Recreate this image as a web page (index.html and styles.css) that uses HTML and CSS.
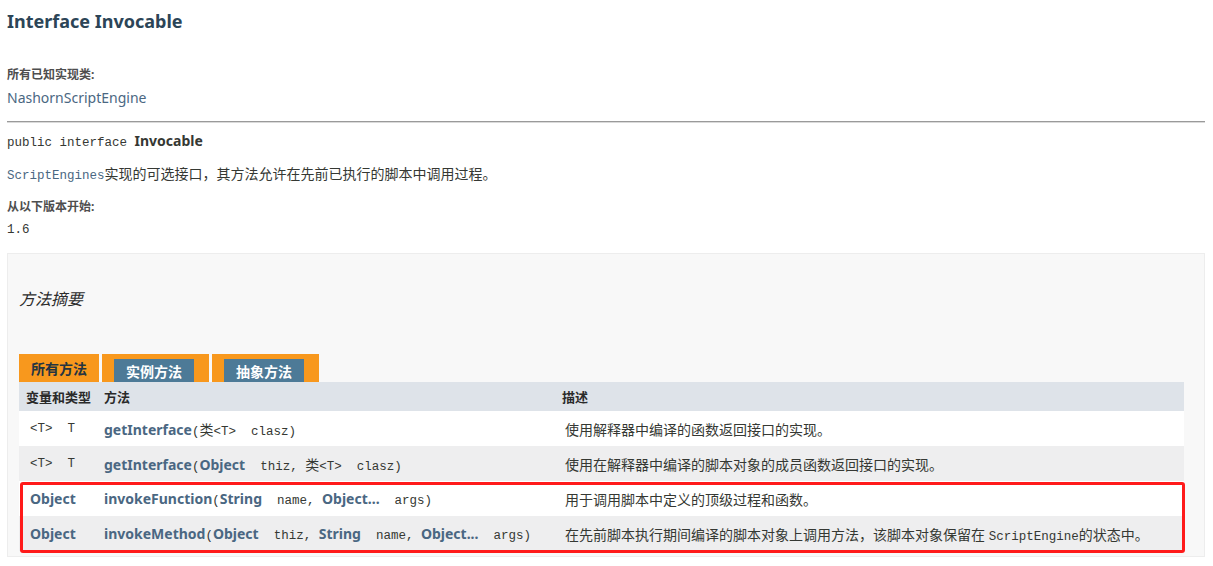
FILE: index.html
```html
<!DOCTYPE html>
<html lang="zh">
<head>
<meta charset="utf-8">
<title>Invocable</title>
<link rel="stylesheet" href="styles.css">
</head>
<body>
<header class="page-header">
  <h2 class="title">Interface Invocable</h2>
  <dl class="info">
    <dt>所有已知实现类:</dt>
    <dd><a class="link" href="#">NashornScriptEngine</a></dd>
  </dl>
</header>
<hr class="rule">
<div class="sig"><span class="mono">public interface </span><span class="sig-name">Invocable</span></div>
<p class="desc"><span class="mono link">ScriptEngines</span>实现的可选接口，其方法允许在先前已执行的脚本中调用过程。</p>
<dl class="info since">
  <dt>从以下版本开始:</dt>
  <dd class="mono">1.6</dd>
</dl>

<section class="summary">
  <h3 class="summary-title">方法摘要</h3>
  <div class="tabs">
    <span class="tab active">所有方法</span>
    <span class="tab"><span class="tab-inner">实例方法</span></span>
    <span class="tab"><span class="tab-inner">抽象方法</span></span>
  </div>
  <div class="table-wrap">
    <table class="methods">
      <colgroup><col class="c1"><col class="c2"><col></colgroup>
      <thead>
        <tr><th>变量和类型</th><th class="th2">方法</th><th>描述</th></tr>
      </thead>
      <tbody>
        <tr class="alt-a">
          <td class="t1 mono">&lt;T&gt;&nbsp; T</td>
          <td class="t2"><a class="mname" href="#">getInterface</a><span class="mono">(</span><span class="cjk">类</span><span class="mono">&lt;T&gt;&nbsp; clasz)</span></td>
          <td class="t3">使用解释器中编译的函数返回接口的实现。</td>
        </tr>
        <tr class="alt-b">
          <td class="t1 mono">&lt;T&gt;&nbsp; T</td>
          <td class="t2"><a class="mname" href="#">getInterface</a><span class="mono">(</span><a class="type" href="#">Object</a><span class="mono">&nbsp;&nbsp;thiz, </span><span class="cjk">类</span><span class="mono">&lt;T&gt;&nbsp; clasz)</span></td>
          <td class="t3">使用在解释器中编译的脚本对象的成员函数返回接口的实现。</td>
        </tr>
        <tr class="alt-a">
          <td class="t1"><a class="type" href="#">Object</a></td>
          <td class="t2"><a class="mname" href="#">invokeFunction</a><span class="mono">(</span><a class="type" href="#">String</a><span class="mono">&nbsp;&nbsp;name, </span><a class="type" href="#">Object</a><span class="type">...</span><span class="mono">&nbsp;&nbsp;args)</span></td>
          <td class="t3">用于调用脚本中定义的顶级过程和函数。</td>
        </tr>
        <tr class="alt-b">
          <td class="t1"><a class="type" href="#">Object</a></td>
          <td class="t2"><a class="mname" href="#">invokeMethod</a><span class="mono">(</span><a class="type" href="#">Object</a><span class="mono">&nbsp;&nbsp;thiz, </span><a class="type" href="#">String</a><span class="mono">&nbsp;&nbsp;name, </span><a class="type" href="#">Object</a><span class="type">...</span><span class="mono">&nbsp;&nbsp;args)</span></td>
          <td class="t3">在先前脚本执行期间编译的脚本对象上调用方法，该脚本对象保留在 <span class="mono">ScriptEngine</span>的状态中。</td>
        </tr>
      </tbody>
    </table>
    <div class="highlight"></div>
  </div>
</section>
</body>
</html>
```

FILE: styles.css
```css
html, body {
  margin: 0;
  padding: 0;
}
body {
  padding: 0 8px 0 7px;
  background: #ffffff;
  color: #353833;
  font-family: "Noto Sans", "Noto Sans CJK SC", sans-serif;
  font-size: 14px;
}
a { text-decoration: none; }
.mono {
  font-family: "Liberation Mono", "Noto Sans CJK SC", monospace;
  font-size: 12.5px;
}
.link { color: #4a6782; }
.cjk { font-family: "Noto Sans CJK SC", sans-serif; }

.title {
  margin: 0;
  padding-top: 10px;
  font-size: 18px;
  line-height: 22px;
  font-weight: bold;
  color: #2c4557;
}
.info { margin: 35px 0 0 0; }
.info dt {
  font-size: 12px;
  line-height: 16px;
  font-weight: bold;
  color: #4e4e4e;
}
.info dd {
  margin: 5px 0 0 0;
  line-height: 20px;
  font-size: 14px;
}
.rule {
  margin: 13px 0 0 0;
  border: 0;
  border-top: 1px solid #9a9a9a;
  border-bottom: 1px solid #dadada;
  height: 0;
}
.sig {
  margin-top: 8px;
  line-height: 20px;
  height: 20px;
}
.sig-name {
  font-weight: bold;
  font-size: 14px;
}
.desc {
  margin: 13px 0 0 0;
  line-height: 20px;
  height: 20px;
}
.since { margin-top: 15px; }
.since dd {
  margin-top: 7px;
  line-height: 16px;
  height: 16px;
  font-size: 12.5px;
}

.summary {
  margin-top: 15px;
  background: #f8f8f8;
  border: 1px solid #ededed;
  padding: 35px 20px 5px 11px;
}
.summary-title {
  margin: 0;
  font-size: 16px;
  line-height: 20px;
  font-style: italic;
  font-weight: normal;
  color: #2c2c2c;
}
.tabs {
  margin-top: 45px;
  display: flex;
  gap: 3px;
  height: 28px;
}
.tab {
  background: #f8981d;
  padding: 5px 15px 0 12px;
  display: flex;
  font-size: 14px;
  font-weight: bold;
}
.tab.active {
  padding: 0 12px;
  width: 56px;
  align-items: center;
  color: #253441;
}
.tab-inner {
  background: #4d7a97;
  color: #ffffff;
  width: 80px;
  display: flex;
  align-items: flex-end;
  justify-content: center;
  line-height: 21px;
}
.table-wrap {
  position: relative;
}
.methods {
  width: 100%;
  border-collapse: collapse;
  table-layout: fixed;
}
.c1 { width: 78px; }
.c2 { width: 458px; }
.methods th {
  background: #dee3e9;
  height: 29px;
  padding: 0 0 0 7px;
  text-align: left;
  font-size: 13px;
  font-weight: bold;
  color: #2a2a2a;
  vertical-align: middle;
}
.methods td {
  height: 35px;
  padding: 0;
  vertical-align: middle;
  white-space: nowrap;
}
.alt-a { background: #ffffff; }
.alt-b { background: #eeeeef; }
.t1 { padding-left: 11px !important; }
.t2 { padding-left: 7px !important; }
.t3 { padding-left: 10px !important; font-size: 14px; color: #353833; }
.mname, .type {
  color: #4a6782;
  font-weight: bold;
  font-size: 14px;
}
.highlight {
  position: absolute;
  left: 1px;
  top: 100px;
  width: 1159px;
  height: 65px;
  border: 3px solid #ff1a1a;
  border-radius: 3px;
  pointer-events: none;
}
```
